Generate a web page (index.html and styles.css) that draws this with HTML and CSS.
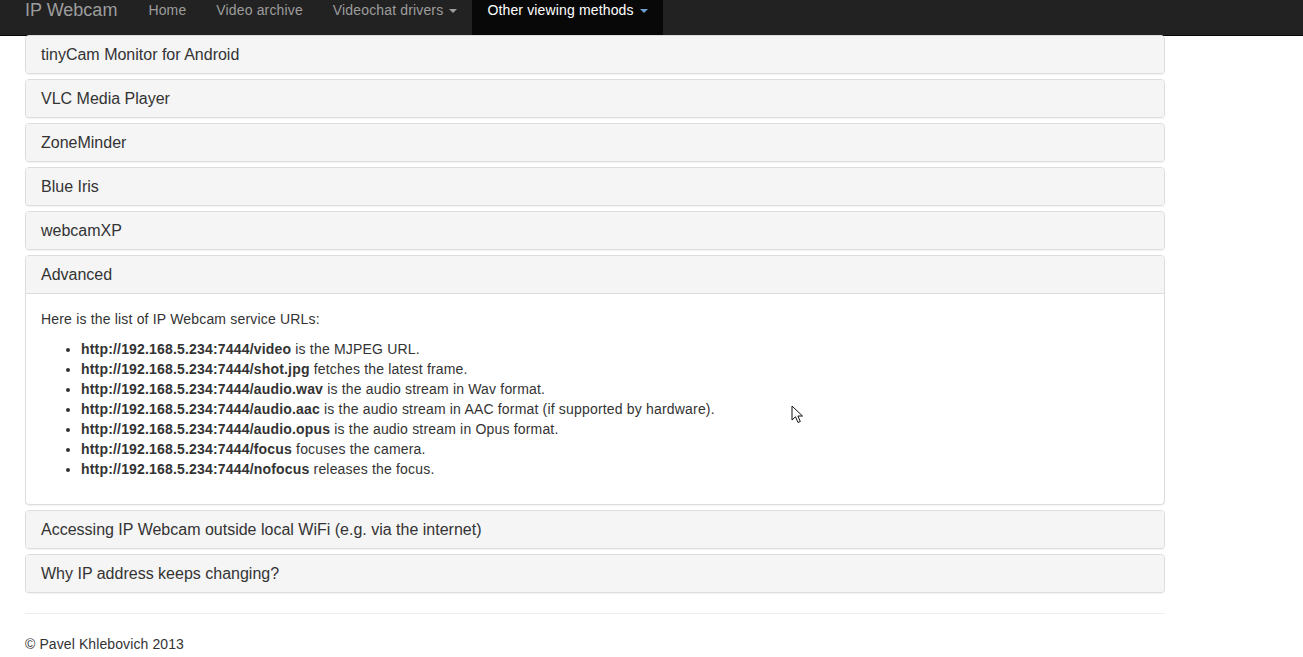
FILE: index.html
```html
<!DOCTYPE html>
<html>
<head>
<meta charset="utf-8">
<title>IP Webcam</title>
<link rel="stylesheet" href="styles.css">
</head>
<body>
<nav class="navbar">
  <a class="brand" href="#">IP Webcam</a>
  <ul class="nav">
    <li><a href="#">Home</a></li>
    <li><a href="#">Video archive</a></li>
    <li><a href="#">Videochat drivers <span class="caret"></span></a></li>
    <li class="active"><a href="#">Other viewing methods <span class="caret"></span></a></li>
  </ul>
</nav>
<div class="container">
  <div class="panel-group">
    <div class="panel"><div class="panel-heading">tinyCam Monitor for Android</div></div>
    <div class="panel"><div class="panel-heading">VLC Media Player</div></div>
    <div class="panel"><div class="panel-heading">ZoneMinder</div></div>
    <div class="panel"><div class="panel-heading">Blue Iris</div></div>
    <div class="panel"><div class="panel-heading">webcamXP</div></div>
    <div class="panel">
      <div class="panel-heading open">Advanced</div>
      <div class="panel-body">
        <p>Here is the list of IP Webcam service URLs:</p>
        <ul>
          <li><b>http://192.168.5.234:7444/video</b> is the MJPEG URL.</li>
          <li><b>http://192.168.5.234:7444/shot.jpg</b> fetches the latest frame.</li>
          <li><b>http://192.168.5.234:7444/audio.wav</b> is the audio stream in Wav format.</li>
          <li><b>http://192.168.5.234:7444/audio.aac</b> is the audio stream in AAC format (if supported by hardware).</li>
          <li><b>http://192.168.5.234:7444/audio.opus</b> is the audio stream in Opus format.</li>
          <li><b>http://192.168.5.234:7444/focus</b> focuses the camera.</li>
          <li><b>http://192.168.5.234:7444/nofocus</b> releases the focus.</li>
        </ul>
      </div>
    </div>
    <div class="panel"><div class="panel-heading">Accessing IP Webcam outside local WiFi (e.g. via the internet)</div></div>
    <div class="panel"><div class="panel-heading">Why IP address keeps changing?</div></div>
  </div>
  <hr class="rule">
  <footer class="footer">© Pavel Khlebovich 2013</footer>
</div>
<svg class="cursor" width="14" height="20" viewBox="0 0 14 20" xmlns="http://www.w3.org/2000/svg">
  <path d="M1 1 L1 15 L4.5 11.8 L7 17.5 L9.3 16.5 L6.9 11 L11.5 11 Z" fill="#fff" stroke="#111" stroke-width="1" stroke-linejoin="miter"/>
</svg>
</body>
</html>
```

FILE: styles.css
```css
html, body {
  margin: 0;
  padding: 0;
  background: #fff;
}
body {
  font-family: "Liberation Sans", Arial, Helvetica, sans-serif;
  font-size: 14px;
  line-height: 20px;
  color: #333;
  position: relative;
}
.navbar {
  height: 35px;
  background: #222;
  border-bottom: 1px solid #080808;
  display: flex;
  align-items: stretch;
  padding-left: 10px;
  letter-spacing: 0.15px;
}
.brand {
  font-size: 18px;
  line-height: 20px;
  padding: 0 15px;
  color: #9d9d9d;
  text-decoration: none;
  letter-spacing: 0;
}
.nav {
  list-style: none;
  margin: 0;
  padding: 0 0 0 1px;
  display: flex;
}
.nav li a {
  display: block;
  height: 35px;
  box-sizing: border-box;
  padding: 0 15px;
  line-height: 20px;
  color: #9d9d9d;
  text-decoration: none;
}
.nav li.active a {
  background: #080808;
  color: #fff;
}
.caret {
  display: inline-block;
  width: 0;
  height: 0;
  margin-left: 2px;
  vertical-align: middle;
  border-top: 4px solid #9d9d9d;
  border-left: 4px solid transparent;
  border-right: 4px solid transparent;
}
.nav li.active .caret {
  border-top-color: #6f9fcf;
}
.container {
  width: 1140px;
  margin-left: 25px;
  margin-top: -1px;
}
.panel-group {
  display: flex;
  flex-direction: column;
  gap: 5px;
}
.panel {
  border: 1px solid #ddd;
  border-radius: 4px;
  background: #fff;
  box-shadow: 0 1px 1px rgba(0,0,0,0.05);
  overflow: hidden;
}
.panel-heading {
  background: #f5f5f5;
  color: #333;
  font-size: 16px;
  line-height: 17px;
  padding: 10px 15px;
}
.panel-heading.open {
  border-bottom: 1px solid #ddd;
}
.panel-body {
  padding: 15px;
  letter-spacing: 0.18px;
}
.panel-body p {
  margin: 0 0 10px;
}
.panel-body ul {
  margin: 0 0 10px;
  padding-left: 40px;
}
.rule {
  margin: 20px 0;
  border: 0;
  border-top: 1px solid #eee;
}
.footer {
  line-height: 20px;
  padding-bottom: 10px;
  letter-spacing: 0.1px;
}
.cursor {
  position: absolute;
  left: 791px;
  top: 405px;
}
```
